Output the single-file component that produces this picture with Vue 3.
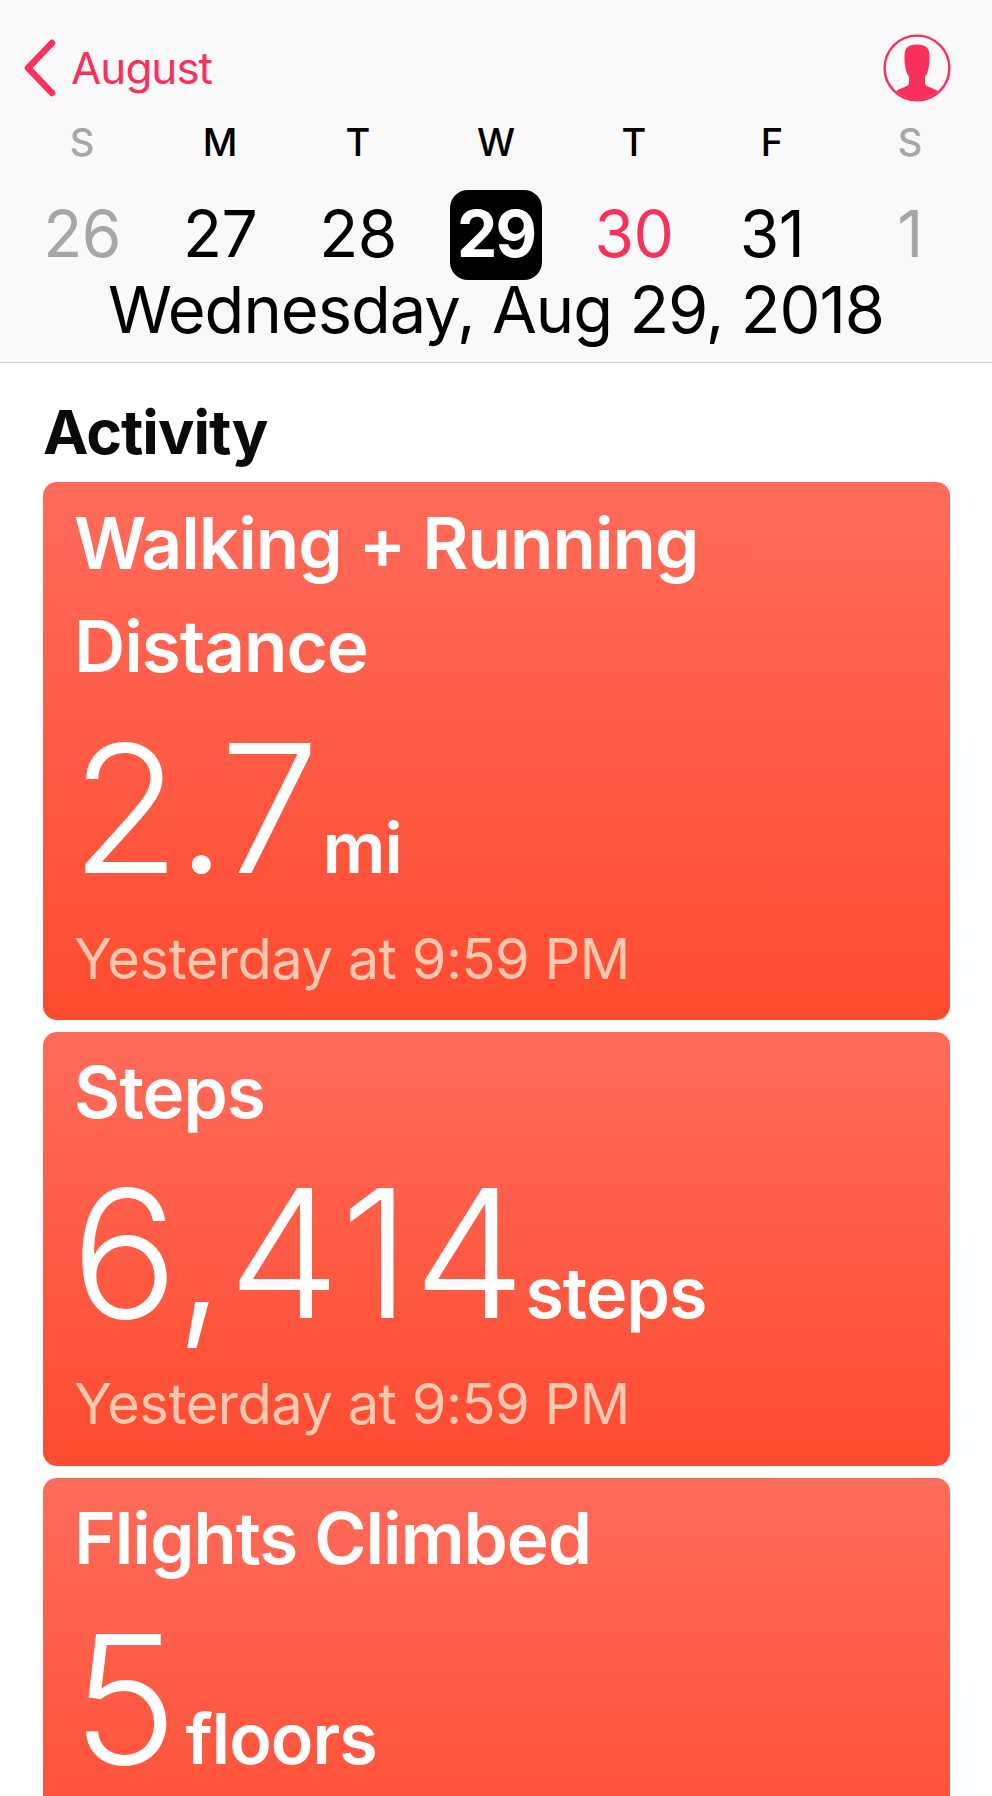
<script setup>
const week = [
  { l: 'S', n: '26', c: 'off' },
  { l: 'M', n: '27', c: '' },
  { l: 'T', n: '28', c: '' },
  { l: 'W', n: '29', c: 'sel' },
  { l: 'T', n: '30', c: 'today' },
  { l: 'F', n: '31', c: '' },
  { l: 'S', n: '1', c: 'off' }
]
const cards = [
  { t: ['Walking + Running', 'Distance'], v: '2.7', u: 'mi', k: 'c1', s: 'Yesterday at 9:59 PM' },
  { t: ['Steps'], v: '6,414', u: 'steps', k: 'c2', s: 'Yesterday at 9:59 PM' },
  { t: ['Flights Climbed'], v: '5', u: 'floors', k: 'c3', s: 'Yesterday at 9:59 PM' }
]
</script>

<template>
  <div class="page">
    <header class="head">
      <div class="nav">
        <div class="back">
          <svg class="chev" width="34" height="58" viewBox="0 0 34 58">
            <path d="M30 4 L6 29 L30 54" fill="none" stroke="#f92f5c" stroke-width="6.5" stroke-linecap="round" stroke-linejoin="round" />
          </svg>
          <span class="month">August</span>
        </div>
        <svg class="avatar" width="68" height="68" viewBox="0 0 68 68">
          <circle cx="34" cy="34" r="32.4" fill="none" stroke="#f92f5c" stroke-width="2.4" />
          <path d="M34 10.5 C43 10.5 46.5 14 46.5 22 C46.5 26 46.5 28 46 31 C45.5 36 44 40 42 43 L42 50 C44 53 50 54 55 57 C49 62.5 42 65.5 34 65.5 C26 65.5 19 62.5 13 57 C18 54 24 53 26 50 L26 43 C24 40 22.5 36 22 31 C21.5 28 21.5 26 21.5 22 C21.5 14 25 10.5 34 10.5 Z" fill="#f92f5c" />
        </svg>
      </div>
      <div class="week">
        <div v-for="(d, i) in week" :key="i" class="day" :class="d.c">
          <span class="letter">{{ d.l }}</span>
          <span class="num"><span>{{ d.n }}</span></span>
        </div>
      </div>
      <div class="date">Wednesday, Aug 29, 2018</div>
    </header>
    <main class="body">
      <h2 class="title">Activity</h2>
      <section v-for="c in cards" :key="c.k" class="card" :class="c.k">
        <h3 v-for="t in c.t" :key="t" class="name">{{ t }}</h3>
        <div class="val"><span class="big">{{ c.v }}</span><span class="unit">{{ c.u }}</span></div>
        <div class="sub">{{ c.s }}</div>
      </section>
    </main>
  </div>
</template>

<style>
html, body { margin: 0; padding: 0; background: #fff; }
</style>

<style scoped>
.page {
  width: 992px;
  height: 1796px;
  overflow: hidden;
  font-family: Inter, "Liberation Sans", sans-serif;
  background: #fff;
}
.head {
  height: 363px;
  box-sizing: border-box;
  background: #f9f9f9;
  border-bottom: 1px solid #cfcfcf;
  padding-top: 34px;
}
.nav {
  display: flex;
  justify-content: space-between;
  align-items: center;
  padding: 0 41px 0 22px;
  height: 68px;
}
.back { display: flex; align-items: center; gap: 15px; }
.month { font-size: 44px; color: #f92f5c; letter-spacing: -1px; }
.week {
  display: grid;
  grid-template-columns: repeat(7, 138px);
  padding-left: 13px;
  margin-top: 18px;
}
.day { display: flex; flex-direction: column; align-items: center; color: #000; }
.letter { font-size: 38px; line-height: 44px; font-weight: 500; }
.num {
  margin-top: 26px;
  width: 92px;
  height: 90px;
  box-sizing: border-box;
  padding-bottom: 4px;
  display: flex;
  align-items: center;
  justify-content: center;
  font-size: 64px;
  letter-spacing: -0.5px;
  border-radius: 18px;
}
.off { color: #a6a6a6; }
.today .num { color: #f92f5c; }
.sel .num { background: #000; color: #fff; font-weight: 700; letter-spacing: -2px; }
.date {
  margin-top: -4px;
  text-align: center;
  font-size: 65px;
  line-height: 68px;
  letter-spacing: -1px;
  color: #000;
}
.body { padding: 0 42px 0 43px; }
.title {
  margin: 0;
  padding-top: 37px;
  height: 119px;
  box-sizing: border-box;
  font-size: 61px;
  line-height: 64px;
  font-weight: 700;
  letter-spacing: -1px;
  color: #0a0a0a;
}
.card {
  margin-bottom: 12px;
  padding: 10px 31px 0;
  border-radius: 14px;
  background: linear-gradient(180deg, #ff6b5a 0%, #ff4b30 100%);
  color: #fff;
  box-sizing: border-box;
}
.c1 { height: 538px; }
.c2 { height: 434px; }
.c3 { height: 434px; }
.name {
  margin: 0;
  font-size: 71px;
  line-height: 103px;
  font-weight: 600;
  letter-spacing: -1px;
}
.c2 .name, .c3 .name { line-height: 101px; }
.val { display: flex; align-items: baseline; margin-top: 26px; }
.big {
  font-size: 178px;
  line-height: 170px;
  font-weight: 300;
  letter-spacing: -3px;
}
.c1 .big { letter-spacing: -4px; margin-left: -3px; }
.c2 .big { letter-spacing: 3px; margin-left: -3px; }
.c3 .big { margin-left: -2px; }
.unit { font-size: 70px; font-weight: 600; margin-left: 7px; letter-spacing: -1px; }
.c2 .unit { margin-left: -3px; }
.c3 .unit { margin-left: 11px; }
.sub { margin-top: 35px; font-size: 56px; line-height: 60px; color: #ffc8b0; letter-spacing: -0.5px; }
</style>
